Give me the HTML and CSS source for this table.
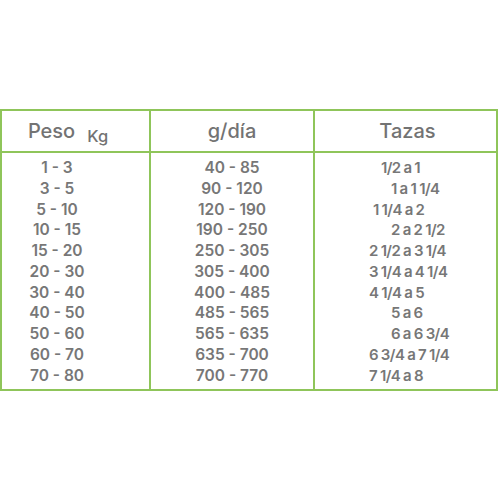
FILE: index.html
```html
<!DOCTYPE html>
<html lang="es">
<head>
<meta charset="utf-8">
<title>Tabla de alimentación</title>
<link rel="stylesheet" href="styles.css">
</head>
<body>
<div class="page">
  <div class="chart">
    <div class="head col1"><span class="h-main">Peso</span><span class="h-unit">Kg</span></div>
    <div class="head col2"><span class="h-main">g/día</span></div>
    <div class="head col3"><span class="h-main">Tazas</span></div>

    <div class="body col1 c-kg">
      <div class="line">1 - 3</div>
      <div class="line">3 - 5</div>
      <div class="line">5 - 10</div>
      <div class="line">10 - 15</div>
      <div class="line">15 - 20</div>
      <div class="line">20 - 30</div>
      <div class="line">30 - 40</div>
      <div class="line">40 - 50</div>
      <div class="line">50 - 60</div>
      <div class="line">60 - 70</div>
      <div class="line">70 - 80</div>
    </div>
    <div class="body col2 c-g">
      <div class="line">40 - 85</div>
      <div class="line">90 - 120</div>
      <div class="line">120 - 190</div>
      <div class="line">190 - 250</div>
      <div class="line">250 - 305</div>
      <div class="line">305 - 400</div>
      <div class="line">400 - 485</div>
      <div class="line">485 - 565</div>
      <div class="line">565 - 635</div>
      <div class="line">635 - 700</div>
      <div class="line">700 - 770</div>
    </div>
    <div class="body col3 c-cups">
      <div class="line ind-c">1/2 a 1</div>
      <div class="line ind-d">1 a 1 1/4</div>
      <div class="line ind-b">1 1/4 a 2</div>
      <div class="line ind-d">2 a 2 1/2</div>
      <div class="line ind-a">2 1/2 a 3 1/4</div>
      <div class="line ind-a">3 1/4 a 4 1/4</div>
      <div class="line ind-a">4 1/4 a 5</div>
      <div class="line ind-d">5 a 6</div>
      <div class="line ind-d">6 a 6 3/4</div>
      <div class="line ind-a">6 3/4 a 7 1/4</div>
      <div class="line ind-a">7 1/4 a 8</div>
    </div>
  </div>
</div>
</body>
</html>
```

FILE: styles.css
```css
html, body {
  margin: 0;
  padding: 0;
  background: #ffffff;
}

body {
  font-family: "Inter", "Open Sans", "Liberation Sans", sans-serif;
  color: #777777;
}

.page {
  padding-top: 109px;
}

.chart {
  width: 498px;
  box-sizing: border-box;
  border: 2px solid #8fc55a;
  display: grid;
  grid-template-columns: 149px 164px 1fr;
}

.col1, .col2 {
  border-right: 2px solid #8fc55a;
}

.head {
  height: 42px;
  box-sizing: border-box;
  border-bottom: 2px solid #8fc55a;
  display: flex;
  align-items: center;
  justify-content: center;
}

.head.col1 {
  padding-right: 15px;
}

.head.col3 {
  padding-left: 4px;
}

.h-main {
  font-size: 20px;
  font-weight: 500;
  color: #737373;
}

.h-unit {
  font-size: 16.5px;
  font-weight: 500;
  color: #737373;
  margin-left: 12px;
  align-self: center;
  padding-top: 9px;
}

.body {
  padding: 5px 0 3px;
  font-size: 15.5px;
  font-weight: 600;
}

.line {
  height: 20.75px;
  line-height: 20.75px;
  white-space: nowrap;
}

.c-kg {
  text-align: center;
  padding-right: 37px;
}

.c-g {
  text-align: center;
}

.c-cups {
  padding-left: 54px;
  font-size: 15px;
  letter-spacing: -0.6px;
  word-spacing: -0.3px;
}

.ind-a { margin-left: 0; }
.ind-b { margin-left: 4px; }
.ind-c { margin-left: 12px; }
.ind-d { margin-left: 22px; }
```
